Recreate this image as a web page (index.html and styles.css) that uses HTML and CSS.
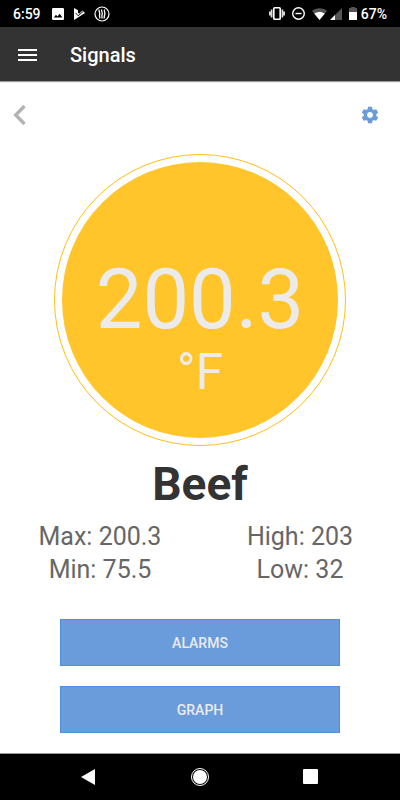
FILE: index.html
```html
<!DOCTYPE html>
<html lang="en">
<head>
<meta charset="utf-8">
<meta name="viewport" content="width=device-width, initial-scale=1">
<title>Signals</title>
<link rel="stylesheet" href="styles.css">
</head>
<body>
<div class="statusbar">
  <span class="clock">6:59</span>
  <div class="notices">
    <svg width="12" height="12" viewBox="0 0 12 12" aria-hidden="true"><path fill="#fff" fill-rule="evenodd" d="M1.200 0h9.600A1.200 1.200 0 0 1 12 1.200v9.600A1.200 1.200 0 0 1 10.800 12H1.200A1.200 1.200 0 0 1 0 10.800V1.200A1.200 1.200 0 0 1 1.200 0zM1.800 9.600h8.600L7.700 5.800 5.400 8.400 4 6.800z"/></svg>
    <svg width="12" height="12" viewBox="0 0 12 12" aria-hidden="true"><path fill="#fff" d="M1 0l4 2.200v2.600l1 1L9.500 2.500 12 5 1 12z"/><path fill="none" stroke="#000" stroke-width=".9" d="M2.500 4.800l2.700 3 4.800-4.300"/></svg>
    <svg width="16" height="16" viewBox="0 0 16 16" fill="none" stroke="#fff" aria-hidden="true"><circle cx="8" cy="8" r="7" stroke-width="1.200"/><path stroke-width="1.300" d="M5.200 3.500c-.8 1.500.9 3 .5 4.500s-.5 3 .3 4.500M7.800 3.500c-.8 1.500.9 3 .4 4.500s-.5 3 0 4.500M10.600 3.500c-.8 1.500.6 3 .2 4.500s-.8 3-.5 4.500"/></svg>
  </div>
  <div class="system">
    <svg width="16" height="13" viewBox="0 0 16 13" aria-hidden="true"><rect x="4.800" y=".8" width="6.400" height="11.400" rx=".8" fill="none" stroke="#fff" stroke-width="1.600"/><path stroke="#ddd" stroke-width="1.700" d="M2.600 2.500v8M.85 4.500v4M13.400 2.500v8M15.150 4.500v4"/></svg>
    <svg class="dnd" width="13" height="13" viewBox="0 0 13 13" fill="none" stroke="#fff" stroke-width="1.400" aria-hidden="true"><circle cx="6.500" cy="6.500" r="5.800"/><path d="M3.500 6.500h6"/></svg>
    <svg width="15" height="12" viewBox="0 0 15 12" aria-hidden="true"><path fill="#555" d="M0 3C4-.8 11-.8 15 3L7.500 12z"/><path fill="#fff" d="M2.200 5.600C5 3.400 10 3.400 12.800 5.600L7.500 12z"/></svg>
    <svg width="12" height="12" viewBox="0 0 12 12" aria-hidden="true"><path fill="#555" d="M12 0v12H0z"/><path fill="#fff" d="M5 7v5H0z"/></svg>
    <svg class="battery" width="8" height="13" viewBox="0 0 8 13" aria-hidden="true"><path fill="#555" d="M2 0h4v1h2v4H0V1h2z"/><path fill="#fff" d="M0 5h8v8H0z"/></svg>
    <span>67%</span>
  </div>
</div>
<header class="appbar">
  <button class="icon-button" type="button" aria-label="Menu"><svg width="19" height="14" viewBox="0 0 19 14" aria-hidden="true"><path stroke="#fff" stroke-width="2" d="M0 2h19M0 7h19M0 12h19"/></svg></button>
  <h1 class="title">Signals</h1>
</header>
<main class="screen">
  <div class="tools">
    <button class="icon-button" type="button" aria-label="Back"><svg width="13" height="20" viewBox="0 0 13 20" aria-hidden="true"><path fill="none" stroke="#b3b3b3" stroke-width="3.400" d="M11.500 1L2.700 10l8.800 9"/></svg></button>
    <button class="icon-button" type="button" aria-label="Settings"><svg width="20" height="20" viewBox="0 0 24 24" aria-hidden="true"><path fill="#6a9cdc" d="M19.430 12.980c.04-.32.07-.64.07-.98s-.03-.66-.07-.98l2.110-1.650c.19-.15.24-.42.12-.64l-2-3.460c-.12-.22-.39-.3-.61-.22l-2.490 1c-.52-.4-1.080-.73-1.690-.98l-.38-2.650C14.460 2.180 14.250 2 14 2h-4c-.25 0-.46.18-.49.42l-.38 2.650c-.61.25-1.170.59-1.690.98l-2.490-1c-.23-.09-.49 0-.61.22l-2 3.460c-.13.22-.07.49.12.64l2.110 1.650c-.04.32-.07.65-.07.98s.03.66.07.98l-2.110 1.650c-.19.15-.24.42-.12.64l2 3.460c.12.22.39.3.61.22l2.490-1c.52.4 1.080.73 1.690.98l.38 2.650c.03.24.24.42.49.42h4c.25 0 .46-.18.49-.42l.38-2.650c.61-.25 1.170-.59 1.690-.98l2.490 1c.23.09.49 0 .61-.22l2-3.460c.12-.22.07-.49-.12-.64zM12 15.500c-1.930 0-3.500-1.570-3.500-3.500s1.570-3.500 3.500-3.500 3.500 1.570 3.500 3.500-1.570 3.500-3.500 3.500z"/></svg></button>
  </div>
  <div class="dial">
    <div class="dial-face">
      <span class="reading">200.3</span>
      <span class="unit">°F</span>
    </div>
  </div>
  <h2 class="channel">Beef</h2>
  <div class="stats">
    <span>Max: 200.3</span>
    <span>High: 203</span>
    <span>Min: 75.5</span>
    <span>Low: 32</span>
  </div>
  <div class="actions">
    <button class="action" type="button">ALARMS</button>
    <button class="action" type="button">GRAPH</button>
  </div>
</main>
<nav class="navbar">
  <button class="icon-button" type="button" aria-label="Back"><svg width="20" height="20" viewBox="0 0 20 20" aria-hidden="true"><path fill="#fff" d="M16 2v16L2 10z"/></svg></button>
  <button class="icon-button" type="button" aria-label="Home"><svg width="20" height="20" viewBox="0 0 20 20" aria-hidden="true"><circle cx="10" cy="10" r="8.500" fill="none" stroke="#fff"/><circle cx="10" cy="10" r="7" fill="#fff"/></svg></button>
  <button class="icon-button" type="button" aria-label="Recent apps"><svg width="20" height="20" viewBox="0 0 20 20" aria-hidden="true"><rect x="2" y="2" width="15" height="15" rx="1" fill="#fff"/></svg></button>
</nav>
</body>
</html>
```
FILE: styles.css
```css
* {
  box-sizing: border-box;
}

body {
  margin: 0;
  min-height: 100vh;
  display: flex;
  flex-direction: column;
  font-family: Roboto, "Liberation Sans", sans-serif;
  background: #fff;
}

svg {
  display: block;
}

.icon-button {
  display: block;
  padding: 0;
  border: 0;
  background: none;
}

.statusbar {
  display: flex;
  align-items: center;
  height: 27px;
  padding: 0 13px;
  background: #000;
  color: #fff;
  font-size: 14px;
  font-weight: 500;
}

.notices {
  display: flex;
  align-items: center;
  gap: 9px;
  margin-left: 11px;
}

.system {
  display: flex;
  align-items: center;
  gap: 3px;
  margin-left: auto;
}

.dnd {
  margin: 0 4px;
}

.battery {
  margin: 0 1px 0 4px;
}

.appbar {
  display: flex;
  align-items: center;
  gap: 33px;
  height: 54px;
  padding: 1px 18px 0;
  background: #333;
  box-shadow: 0 1px 1px #999;
}

.title {
  margin: 0;
  color: #fff;
  font-size: 20px;
  font-weight: 500;
}

.screen {
  flex: 1;
  display: flex;
  flex-direction: column;
  align-items: center;
  padding-bottom: 20px;
}

.tools {
  align-self: stretch;
  display: flex;
  align-items: center;
  justify-content: space-between;
  padding: 24px 20px 29px 13px;
}

.dial {
  display: grid;
  width: 73%;
  aspect-ratio: 1;
  padding: 7px;
  border: 1px solid #ffbf10;
  border-radius: 50%;
}

.dial-face {
  display: flex;
  flex-direction: column;
  align-items: center;
  justify-content: center;
  padding-top: 60px;
  border-radius: 50%;
  background: #ffc52b;
  color: #ebebeb;
}

.reading {
  font-size: 83px;
  line-height: 84px;
}

.unit {
  font-size: 50px;
  line-height: 60px;
}

.channel {
  margin: 10px 0 8px;
  color: #333;
  font-size: 46px;
  line-height: 56px;
  font-weight: 700;
}

.stats {
  align-self: stretch;
  display: grid;
  grid-template-columns: 1fr 1fr;
  color: #666;
  font-size: 25px;
  line-height: 33px;
  text-align: center;
}

.actions {
  display: grid;
  gap: 20px;
  width: 70%;
  margin-top: auto;
}

.action {
  height: 47px;
  border: 1px solid #4c90dc;
  background: #6a9cdc;
  color: #ebebeb;
  font-family: inherit;
  font-size: 14px;
  font-weight: 500;
}

.navbar {
  display: flex;
  align-items: center;
  justify-content: space-around;
  height: 47px;
  padding: 0 33px;
  border-top: 1px solid #999;
  background: #000;
}
```
